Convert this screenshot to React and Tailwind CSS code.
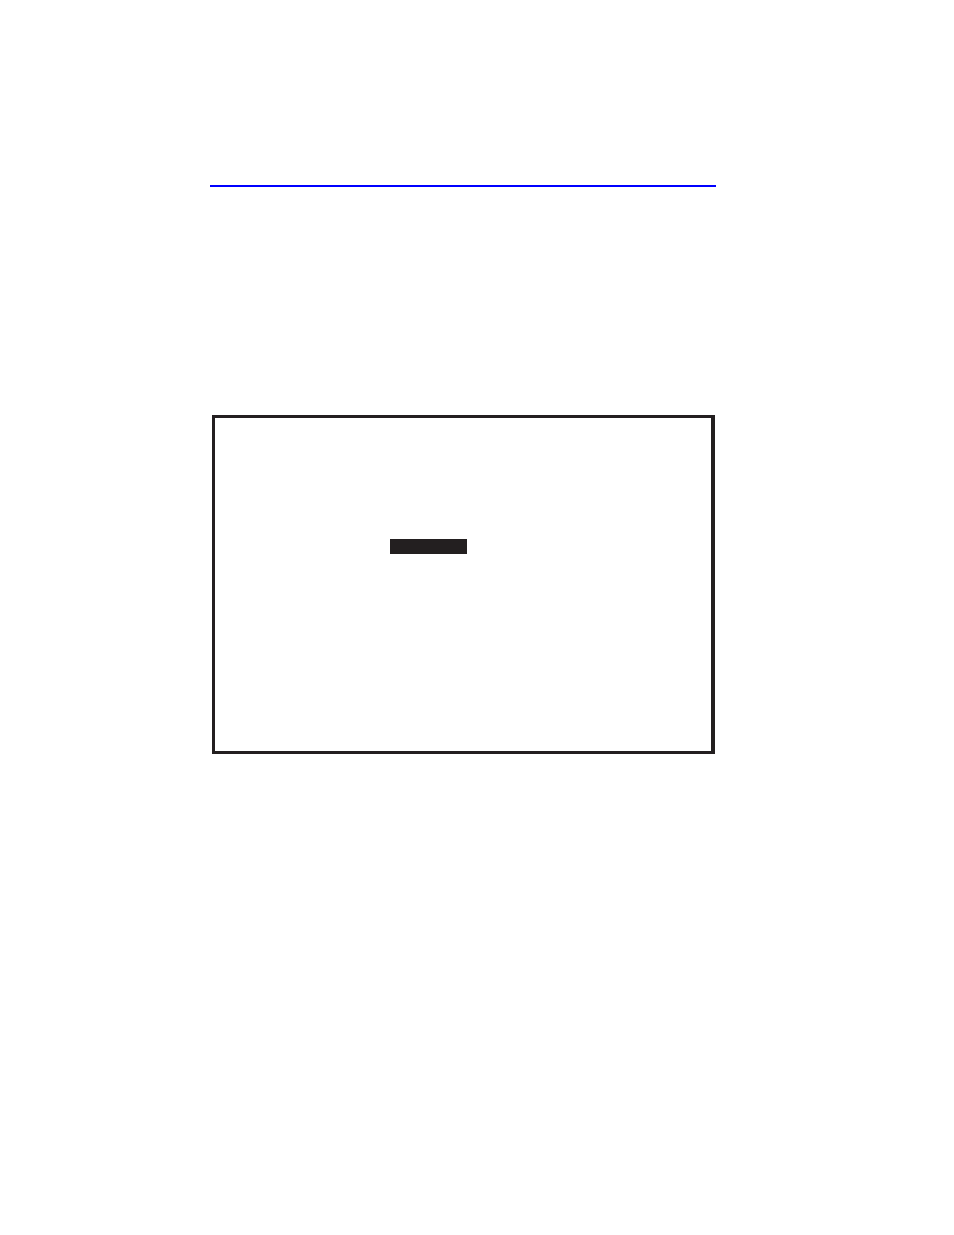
export default function App() {
  return (
    <main className="min-h-screen bg-white pt-[185px] pr-[238px] pb-12 pl-[210px]">
      <hr className="h-0.5 border-0 bg-[#0000ff]" />
      <section className="mt-[228px] mr-px ml-0.5 border-[3px] border-r-4 border-[#231f20] pt-[121px] pb-[197px] pl-[175px]">
        <div className="h-[15px] w-[77px] bg-[#231f20]" />
      </section>
    </main>
  );
}
